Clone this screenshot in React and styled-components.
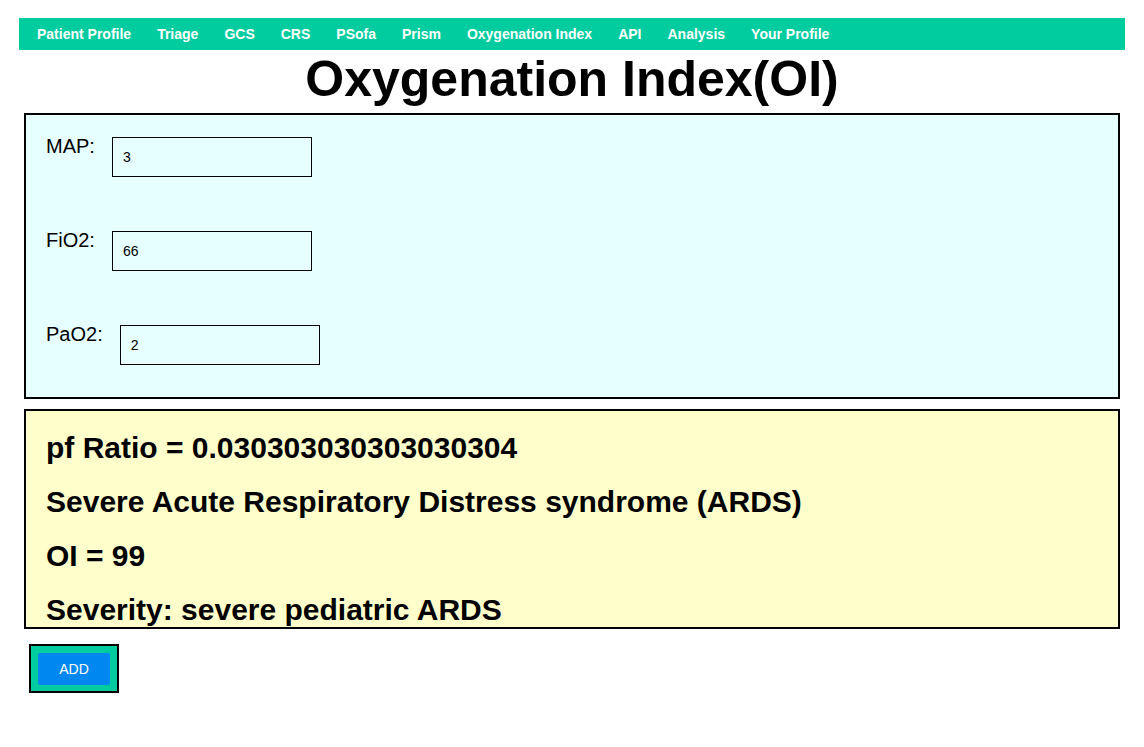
import React, { useState } from "react";
import styled, { createGlobalStyle } from "styled-components";

const GlobalStyle = createGlobalStyle`
    body {
        margin: 8px;
        background: #ffffff;
        font-family: "Liberation Sans", Arial, sans-serif;
        color: #000000;
    }
`;

const navItems = ["Patient Profile", "Triage", "GCS", "CRS", "PSofa", "Prism", "Oxygenation Index", "API", "Analysis", "Your Profile"];

const Page = styled.div`
    display: flex;
    flex-direction: column;
`;

const Nav = styled.nav`
    display: flex;
    align-items: center;
    height: 32px;
    margin: 10px 11px 0;
    padding-left: 5px;
    background: #00cc9f;
`;

const NavLink = styled.a`
    padding: 0 13px;
    color: #ffffff;
    font-size: 14px;
    font-weight: bold;
    line-height: 32px;
    text-decoration: none;
    cursor: pointer;
`;

const Title = styled.h1`
    margin: 0 0 5px;
    font-size: 50px;
    font-weight: bold;
    text-align: center;
`;

const Panel = styled.div`
    margin: 0 16px;
    border: 2px solid #000000;
    background: ${(props) => props.bg};
`;

const InputPanel = styled(Panel)`
    display: flex;
    flex-direction: column;
    gap: 54px;
    padding: 22px 20px 32px;
`;

const Row = styled.div`
    display: flex;
    align-items: flex-start;
    gap: 17px;
`;

const Label = styled.label`
    font-size: 20px;
    line-height: 23px;
    margin-top: -2px;
`;

const Field = styled.input`
    box-sizing: border-box;
    width: 200px;
    height: 40px;
    padding: 0 10px;
    border: 1px solid #000000;
    background: transparent;
    font-family: "Liberation Sans", Arial, sans-serif;
    font-size: 14px;
    color: #000000;
    outline: none;
`;

const ResultPanel = styled(Panel)`
    margin-top: 10px;
    padding: 20px 20px 0;
`;

const ResultLine = styled.h2`
    margin: 0 0 20px;
    font-size: 30px;
    font-weight: bold;
    line-height: 34px;

    &:last-child {
        margin-bottom: 0;
    }
`;

const ButtonFrame = styled.div`
    align-self: flex-start;
    margin: 15px 0 0 21px;
    padding: 7px 7px 6px;
    border: 2px solid #000000;
    background: #00cc9f;
`;

const AddButton = styled.button`
    display: block;
    width: 72px;
    height: 32px;
    border: none;
    border-radius: 2px;
    background: #0088f0;
    color: #ffffff;
    font-family: "Liberation Sans", Arial, sans-serif;
    font-size: 14px;
    cursor: pointer;
`;

const App = () => {
    const [map, setMap] = useState("3");
    const [fio2, setFio2] = useState("66");
    const [pao2, setPao2] = useState("2");

    const pf = Number(pao2) / Number(fio2);
    const oi = (Number(map) * Number(fio2)) / Number(pao2);

    return (
        <Page>
            <GlobalStyle />
            <Nav>
                {navItems.map((item) => (
                    <NavLink key={item}>{item}</NavLink>
                ))}
            </Nav>

            <Title>Oxygenation Index(OI)</Title>

            <InputPanel bg="#e6ffff">
                <Row>
                    <Label>MAP:</Label>
                    <Field value={map} onChange={(e) => setMap(e.target.value)} />
                </Row>
                <Row>
                    <Label>FiO2:</Label>
                    <Field value={fio2} onChange={(e) => setFio2(e.target.value)} />
                </Row>
                <Row>
                    <Label>PaO2:</Label>
                    <Field value={pao2} onChange={(e) => setPao2(e.target.value)} />
                </Row>
            </InputPanel>

            <ResultPanel bg="#ffffcc">
                <ResultLine>pf Ratio = {String(pf)}</ResultLine>
                <ResultLine>Severe Acute Respiratory Distress syndrome (ARDS)</ResultLine>
                <ResultLine>OI = {oi}</ResultLine>
                <ResultLine>Severity: severe pediatric ARDS</ResultLine>
            </ResultPanel>

            <ButtonFrame>
                <AddButton>ADD</AddButton>
            </ButtonFrame>
        </Page>
    );
};

export default App;
